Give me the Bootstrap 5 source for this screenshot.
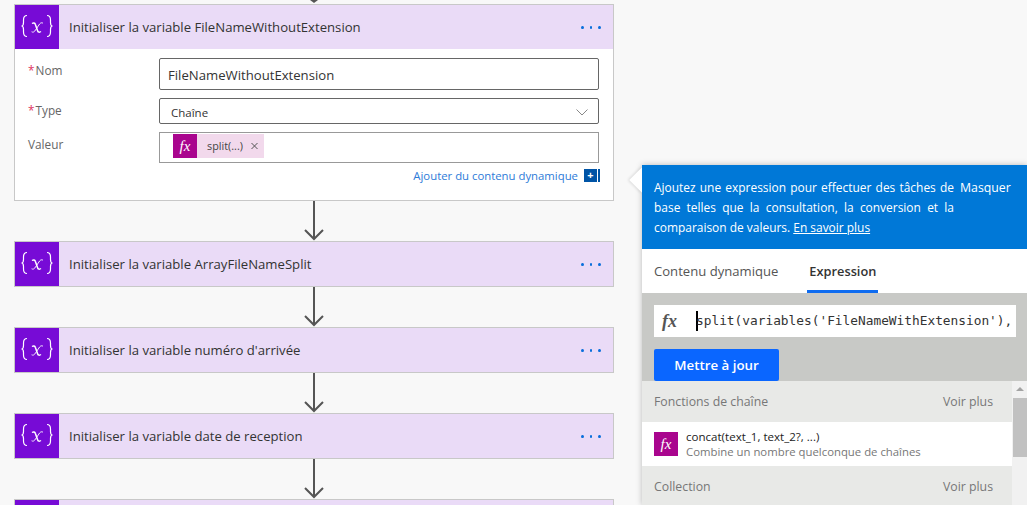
<!DOCTYPE html>
<html lang="fr">
  <head>
    <meta charset="UTF-8" />
    <meta name="viewport" content="width=device-width, initial-scale=1.0" />
    <title>Flow editor</title>
    <link href="https://cdn.jsdelivr.net/npm/bootstrap@5.3.0/dist/css/bootstrap.min.css" rel="stylesheet" />
    <style>
      html, body { height: 505px; overflow: hidden; }
      body { background: #f8f8f8; font-family: "Open Sans", "Liberation Sans", sans-serif; font-size: 12px; color: #444; position: relative; }
      .flow { width: 600px; margin-left: 14px; height: 505px; overflow: hidden; }
      .top-stub { height: 4px; }
      .top-stub svg, .link-arrow svg { display: block; margin: 0 auto; }
      .step { border: 1px solid #c8c8c8; border-radius: 0; background: #fff; }
      .step-head { height: 44px; background: #eadbf7; }
      .step-icon { width: 44px; height: 44px; background: #770bd6; flex: none; }
      .step-title { font-size: 13.15px; color: #333; margin-left: 10px; padding-top: 1px; }
      .step-dots { width: 20px; margin-right: 12px; margin-left: auto; gap: 6px; }
      .step-dots span { width: 3px; height: 3px; border-radius: 50%; background: #0a6fdc; }
      .step-body { height: 151px; padding: 9px 14px 0 13px; }
      .field-row { margin-bottom: 8px; }
      .field-label { width: 131px; flex: none; padding-top: 4px; color: #666; font-size: 11.8px; }
      .req { color: #e0365f; margin-right: 1px; }
      .flow-input { border: 1px solid #666; border-radius: 2px; height: 32px; padding: 4px 8px 0; font-size: 13.15px; color: #333; background: #fff; }
      .flow-select { height: 26px; padding: 3px 10px 0 11px; font-size: 11.5px; border-color: #666; }
      .flow-token-box { border: 1px solid #999; height: 31px; padding: 1px 13px; }
      .token { height: 24px; background: #f2d9ec; font-size: 10.8px; color: #444; padding-right: 2px; }
      .fx-box { background: #a9058e; color: #fff; font-family: "Liberation Serif", serif; font-style: italic; display: flex; align-items: center; justify-content: center; flex: none; }
      .token .fx-box { width: 24px; height: 24px; font-size: 15px; }
      .token-text { padding: 1px 5px 0 10px; }
      .dyn-link { color: #2d7bd8; font-size: 11.35px; text-decoration: none; margin-top: 4px; }
      .plus-box { width: 13px; height: 13px; background: #0054a6; color: #fff; font-size: 11px; font-weight: bold; line-height: 12px; text-align: center; margin-left: 6px; }
      .plus-bar { width: 2px; height: 13px; background: #0054a6; margin-left: 1px; margin-right: -1px; }
      .link-arrow { height: 40px; }

      .side-panel { position: absolute; left: 642px; top: 165px; width: 385px; height: 340px; background: #fff; box-shadow: 0 0 6px rgba(0,0,0,.25); }
      .side-caret { position: absolute; left: -9px; top: 6px; width: 18px; height: 18px; background: #fff; transform: rotate(45deg); box-shadow: -1px 1px 3px rgba(0,0,0,.12); }
      .side-head { position: relative; height: 84px; background: #0078d7; color: #fff; padding: 13px 12px 0 12px; font-size: 11.95px; line-height: 20px; }
      .side-head-text { width: 300px; text-align: justify; flex: none; }
      .side-head-text a { color: #fff; }
      .side-hide { margin-left: 6px; font-size: 12.3px; }
      .side-tabs { height: 44px; background: #fff; padding-left: 12px; border: 0; }
      .side-tabs .nav-link { border: 0; border-radius: 0; padding: 0; height: 44px; line-height: 44px; color: #555; font-size: 13.1px; background: none; margin-right: 29px; }
      .side-tabs .nav-link.active { color: #333; font-weight: 600; font-size: 12.8px; border-bottom: 3px solid #0f6cf0; padding: 0 2px; background: none; }
      .expr-area { height: 88px; background: #c8c9c6; padding: 12px 11px 0 12px; }
      .expr-input { height: 32px; background: #fff; }
      .expr-fx { width: 42px; flex: none; padding-left: 8px; font-family: "Liberation Serif", serif; font-style: italic; font-weight: bold; font-size: 18px; color: #555; }
      .expr-caret { width: 2px; height: 20px; background: #000; flex: none; }
      .expr-code { font-family: "DejaVu Sans Mono", "Liberation Mono", monospace; font-size: 12.82px; color: #333; white-space: nowrap; margin-left: -2px; }
      .update-btn { width: 125px; height: 32px; margin-top: 12px; border-radius: 2px; background: #0a66ff; border: 0; font-size: 13.3px; font-weight: 600; padding: 1px 0 0; display: block; }
      .fn-wrap { height: 124px; }
      .fn-list { flex: 1; overflow: hidden; }
      .fn-group { background: #e8e9e7; color: #777; font-size: 12.3px; padding: 2px 19px 0 12px; height: 41px; }
      .fn-item { height: 44px; background: #fff; padding: 0 12px; }
      .fn-item .fx-box { width: 24px; height: 24px; font-size: 15px; margin-right: 8px; }
      .fn-name { font-size: 11.55px; color: #222; line-height: 15px; }
      .fn-desc { font-size: 11.35px; color: #777; line-height: 15px; }
      .fn-scroll { width: 15px; background: #f1f1f1; flex: none; }
      .fn-scroll-up { width: 0; height: 0; border: 4px solid transparent; border-bottom: 4px solid #a3a3a3; border-top: 0; margin: 6px auto 0; }
      .fn-scroll-thumb { height: 59px; background: #c1c1c1; margin: 7px 0 0 1px; }
    </style>
  </head>
  <body>
    <svg width="0" height="0" class="d-block position-absolute">
      <defs>
        <symbol id="var-icon" viewBox="0 0 44 44">
          <g fill="none" stroke="#fff" stroke-width="1.2">
            <path d="M12 10.500c-3 0-3.500 2-3.500 4.500v2.500c0 2-.5 3.500-2 3.500 1.500 0 2 1.500 2 3.500v2.500c0 2.500.5 4.500 3.500 4.500" />
            <path d="M32 10.500c3 0 3.500 2 3.500 4.500v2.500c0 2 .5 3.500 2 3.500-1.500 0-2 1.500-2 3.500v2.500c0 2.500-.5 4.500-3.500 4.500" />
            <path d="M17 18.500c1.500-1 2.800-.8 3.300.8l2.400 6.600c.5 1.400 1.800 1.600 3.300.6" stroke-width="1.500" />
            <path d="M28 18.200c-1.200-.8-2.400-.4-3.400.8l-4.800 7c-.9 1.200-2 1.400-3.200.8" stroke-width=".9" />
          </g>
        </symbol>
        <symbol id="arrow-down" viewBox="0 0 22 40">
          <path d="M11 0v38M2 29l9 9 9-9" fill="none" stroke="#555" stroke-width="2" />
        </symbol>
      </defs>
    </svg>

    <div class="flow">
      <div class="top-stub"><svg width="8" height="4"><path d="M0 0l4 3 4-3z" fill="#555" /></svg></div>

      <div class="card step">
        <div class="d-flex align-items-center step-head">
          <div class="step-icon"><svg width="44" height="44"><use href="#var-icon" /></svg></div>
          <div class="step-title">Initialiser la variable FileNameWithoutExtension</div>
          <div class="d-flex step-dots"><span></span><span></span><span></span></div>
        </div>
        <div class="step-body">
          <div class="d-flex field-row">
            <div class="field-label"><span class="req">*</span>Nom</div>
            <div class="flow-input flex-grow-1 d-flex align-items-center">FileNameWithoutExtension</div>
          </div>
          <div class="d-flex field-row">
            <div class="field-label"><span class="req">*</span>Type</div>
            <div class="flow-input flow-select flex-grow-1 d-flex align-items-center justify-content-between">
              <span>Chaîne</span>
              <svg width="12" height="7" viewBox="0 0 12 7"><path d="M.5.500 6 6l5.500-5.500" fill="none" stroke="#888" /></svg>
            </div>
          </div>
          <div class="d-flex">
            <div class="field-label">Valeur</div>
            <div class="flow-token-box flex-grow-1 d-flex align-items-start">
              <div class="token d-flex align-items-center">
                <div class="fx-box">fx</div>
                <span class="token-text">split(...)</span>
                <svg width="14" height="14" viewBox="0 0 14 14"><path d="M3.500 4l6 6M9.500 4l-6 6" stroke="#555" /></svg>
              </div>
            </div>
          </div>
          <div class="d-flex justify-content-end align-items-center dyn-link">
            <a href="#" class="dyn-link mt-0">Ajouter du contenu dynamique</a>
            <div class="plus-box">+</div>
            <div class="plus-bar"></div>
          </div>
        </div>
      </div>

      <div class="link-arrow"><svg width="22" height="40"><use href="#arrow-down" /></svg></div>
      <div class="card step">
        <div class="d-flex align-items-center step-head">
          <div class="step-icon"><svg width="44" height="44"><use href="#var-icon" /></svg></div>
          <div class="step-title">Initialiser la variable ArrayFileNameSplit</div>
          <div class="d-flex step-dots"><span></span><span></span><span></span></div>
        </div>
      </div>

      <div class="link-arrow"><svg width="22" height="40"><use href="#arrow-down" /></svg></div>
      <div class="card step">
        <div class="d-flex align-items-center step-head">
          <div class="step-icon"><svg width="44" height="44"><use href="#var-icon" /></svg></div>
          <div class="step-title">Initialiser la variable numéro d'arrivée</div>
          <div class="d-flex step-dots"><span></span><span></span><span></span></div>
        </div>
      </div>

      <div class="link-arrow"><svg width="22" height="40"><use href="#arrow-down" /></svg></div>
      <div class="card step">
        <div class="d-flex align-items-center step-head">
          <div class="step-icon"><svg width="44" height="44"><use href="#var-icon" /></svg></div>
          <div class="step-title">Initialiser la variable date de reception</div>
          <div class="d-flex step-dots"><span></span><span></span><span></span></div>
        </div>
      </div>

      <div class="link-arrow"><svg width="22" height="40"><use href="#arrow-down" /></svg></div>
      <div class="card step">
        <div class="d-flex align-items-center step-head">
          <div class="step-icon"></div>
        </div>
      </div>
    </div>

    <div class="side-panel">
      <div class="side-caret"></div>
      <div class="side-head d-flex align-items-start">
        <div class="side-head-text">Ajoutez une expression pour effectuer des tâches de base telles que la consultation, la conversion et la comparaison de valeurs. <a href="#">En savoir plus</a></div>
        <div class="side-hide">Masquer</div>
      </div>
      <ul class="nav nav-tabs side-tabs">
        <li class="nav-item"><a class="nav-link" href="#">Contenu dynamique</a></li>
        <li class="nav-item"><a class="nav-link active" href="#">Expression</a></li>
      </ul>
      <div class="expr-area">
        <div class="expr-input d-flex align-items-center">
          <div class="expr-fx">fx</div>
          <div class="expr-caret"></div>
          <div class="expr-code">split(variables('FileNameWithExtension'),</div>
        </div>
        <button class="btn btn-primary update-btn">Mettre à jour</button>
      </div>
      <div class="d-flex fn-wrap">
        <div class="fn-list">
          <div class="fn-group d-flex align-items-center justify-content-between"><span>Fonctions de chaîne</span><span>Voir plus</span></div>
          <div class="fn-item d-flex align-items-center">
            <div class="fx-box">fx</div>
            <div>
              <div class="fn-name">concat(text_1, text_2?, ...)</div>
              <div class="fn-desc">Combine un nombre quelconque de chaînes</div>
            </div>
          </div>
          <div class="fn-group d-flex align-items-center justify-content-between"><span>Collection</span><span>Voir plus</span></div>
        </div>
        <div class="fn-scroll">
          <div class="fn-scroll-up"></div>
          <div class="fn-scroll-thumb"></div>
        </div>
      </div>
    </div>

    <script src="https://cdn.jsdelivr.net/npm/bootstrap@5.3.0/dist/js/bootstrap.bundle.min.js"></script>
  </body>
</html>
